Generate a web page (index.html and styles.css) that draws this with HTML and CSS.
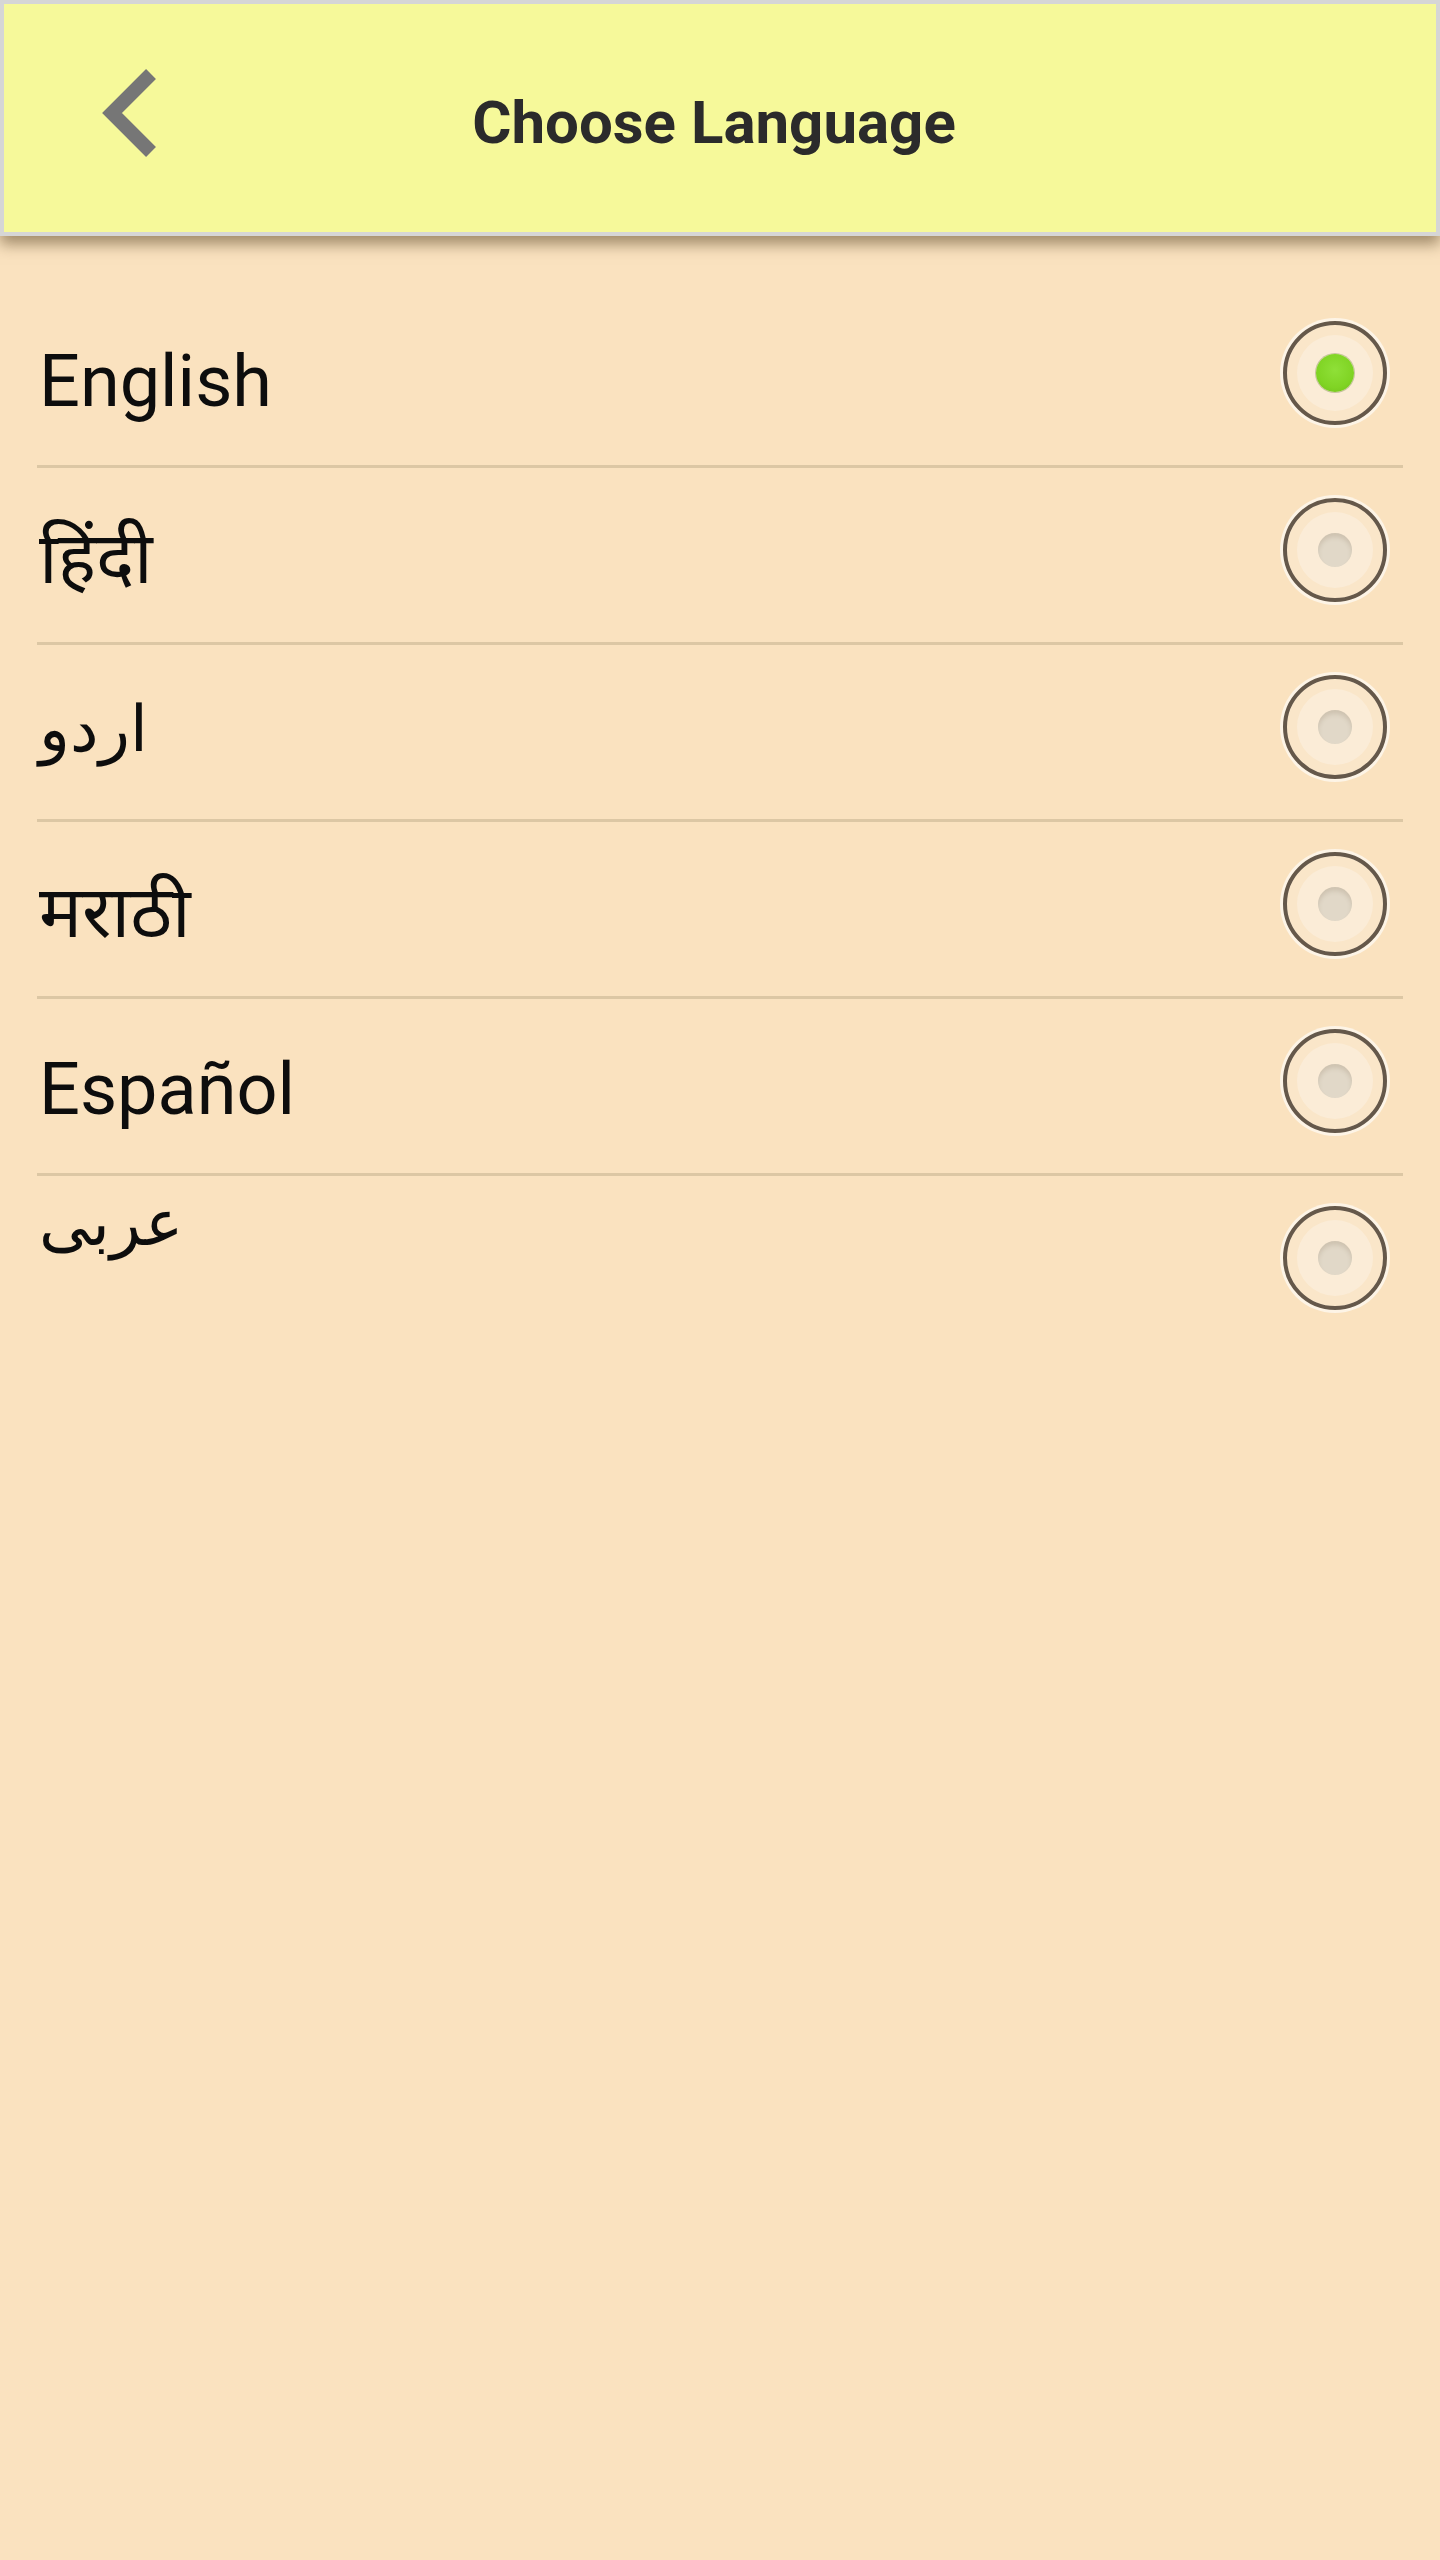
FILE: index.html
```html
<!DOCTYPE html>
<html lang="en">
<head>
<meta charset="utf-8">
<title>Choose Language</title>
<link rel="stylesheet" href="styles.css">
</head>
<body>
<header class="topbar">
  <button class="back" aria-label="Back">
    <svg class="back-icon" width="60" height="100" viewBox="0 0 60 100">
      <polyline points="53,8 14,47 53,86" fill="none" stroke="#767676" stroke-width="14" stroke-linejoin="miter" stroke-linecap="butt"/>
    </svg>
  </button>
  <h1 class="title">Choose Language</h1>
  <span class="spacer"></span>
</header>
<ul class="langs">
  <li class="lang-row"><span class="lang-name">English</span><span class="radio checked"></span></li>
  <li class="lang-row"><span class="lang-name">हिंदी</span><span class="radio"></span></li>
  <li class="lang-row"><span class="lang-name lang-urdu">اردو</span><span class="radio"></span></li>
  <li class="lang-row"><span class="lang-name">मराठी</span><span class="radio"></span></li>
  <li class="lang-row"><span class="lang-name">Español</span><span class="radio"></span></li>
  <li class="lang-row"><span class="lang-name lang-arabic">عربی</span><span class="radio"></span></li>
</ul>
</body>
</html>
```
FILE: styles.css
```css
html, body {
  margin: 0;
  padding: 0;
}
body {
  background: #fae2bf;
  min-height: 2560px;
  font-family: Roboto, "Noto Sans", sans-serif;
}
.topbar {
  position: relative;
  z-index: 2;
  box-sizing: border-box;
  height: 236px;
  background: #f6f99a;
  border: 4px solid #d6d6d6;
  box-shadow: 0 8px 14px rgba(70, 50, 20, 0.5);
  display: grid;
  grid-template-columns: 1fr auto 1fr;
  align-items: center;
}
.back {
  justify-self: start;
  margin: 0 0 4px 94px;
  padding: 0;
  border: 0;
  background: transparent;
  width: 60px;
  height: 100px;
  display: block;
}
.back-icon {
  display: block;
}
.title {
  margin: 10px 12px 0 0;
  font-family: Roboto, "Liberation Sans", sans-serif;
  font-weight: 700;
  font-size: 60px;
  color: #2b2b2b;
  line-height: 1;
}
.langs {
  list-style: none;
  margin: 55px 37px 0 37px;
  padding: 0;
}
.lang-row {
  box-sizing: border-box;
  height: 177px;
  border-bottom: 3px solid #dcc7a4;
  display: flex;
  justify-content: space-between;
  align-items: flex-start;
}
.lang-row:last-child {
  border-bottom: 0;
}
.lang-name {
  padding: 50px 0 0 2px;
  font-size: 72px;
  line-height: 82px;
  color: #0d0d0d;
}
.lang-urdu {
  font-size: 64px;
  padding-top: 44px;
}
.lang-arabic {
  font-size: 64px;
  padding-top: 7px;
}
.radio {
  box-sizing: border-box;
  width: 104px;
  height: 104px;
  margin: 30px 16px 0 0;
  border-radius: 50%;
  border: 4px solid #65584a;
  background: #fbecd7;
  box-shadow: 0 0 0 3px #fdf4e6, inset 0 0 0 10px #fae6c9;
  display: grid;
  place-items: center;
}
.radio::after {
  content: "";
  width: 34px;
  height: 34px;
  border-radius: 50%;
  background: #e1d8c8;
  box-shadow: inset 0 4px 4px rgba(120, 100, 70, 0.18);
}
.radio.checked::after {
  width: 38px;
  height: 38px;
  background: radial-gradient(circle at 50% 42%, #8fe038 0%, #80d424 60%, #6fbd1c 100%);
  box-shadow: 0 0 0 1px rgba(100, 120, 50, 0.35);
}
```
